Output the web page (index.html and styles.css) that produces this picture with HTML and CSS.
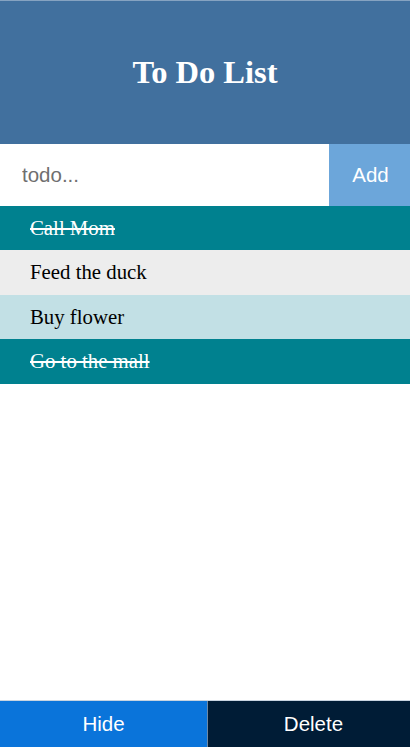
FILE: index.html
```html
<!DOCTYPE html>
<html lang="en">
<head>
<meta charset="utf-8">
<title>To Do List</title>
<link rel="stylesheet" href="styles.css">
</head>
<body>
<div class="app">
  <header class="header">
    <h1 class="title">To Do List</h1>
  </header>
  <form class="add-row">
    <input class="todo-input" type="text" placeholder="todo...">
    <button class="add-btn" type="button">Add</button>
  </form>
  <ul class="list">
    <li class="item done">Call Mom</li>
    <li class="item even">Feed the duck</li>
    <li class="item odd">Buy flower</li>
    <li class="item done">Go to the mall</li>
  </ul>
  <footer class="footer">
    <button class="foot-btn hide-btn" type="button">Hide</button>
    <button class="foot-btn delete-btn" type="button">Delete</button>
  </footer>
</div>
</body>
</html>
```

FILE: styles.css
```css
* { box-sizing: border-box; }
html, body { margin: 0; padding: 0; }
body {
  font-family: "Liberation Serif", "Times New Roman", serif;
  background: #ffffff;
}
.app {
  display: flex;
  flex-direction: column;
  min-height: 100vh;
}
.header {
  height: 144px;
  background: #41709e;
  border-top: 1px solid #86a3c1;
  display: flex;
  align-items: center;
  justify-content: center;
}
.title {
  margin: 0;
  color: #ffffff;
  font-size: 32.5px;
  font-weight: bold;
}
.add-row {
  display: flex;
  height: 61.5px;
  margin: 0;
}
.todo-input {
  flex: 1;
  min-width: 0;
  border: none;
  outline: none;
  padding: 0 22px;
  font-family: "Liberation Sans", Arial, sans-serif;
  font-size: 20.5px;
  color: #333;
  background: #ffffff;
}
.todo-input::placeholder { color: #6f6f6f; }
.add-btn {
  width: 81px;
  border: none;
  background: #6ca6da;
  color: #ffffff;
  font-family: "Liberation Sans", Arial, sans-serif;
  font-size: 20.5px;
  padding: 0 0 0 2px;
}
.list {
  list-style: none;
  margin: 0;
  padding: 0;
  flex: 1;
}
.item {
  height: 44.5px;
  display: flex;
  align-items: center;
  padding: 0 30px;
  font-size: 20.8px;
  color: #000000;
}
.done {
  background: #00818f;
  color: #ffffff;
  text-decoration: line-through;
}
.even { background: #ededed; }
.odd { background: #c2e0e5; }
.footer {
  display: flex;
  height: 47px;
  border-top: 1px solid #c8d4e0;
}
.foot-btn {
  border: none;
  color: #ffffff;
  font-family: "Liberation Sans", Arial, sans-serif;
  font-size: 20.5px;
  padding: 0;
}
.hide-btn {
  flex: 0 0 208px;
  background: #0a74da;
  border-right: 1px solid #6f8aa6;
}
.delete-btn {
  flex: 1;
  padding-left: 9px;
  background: #001c36;
}
```
